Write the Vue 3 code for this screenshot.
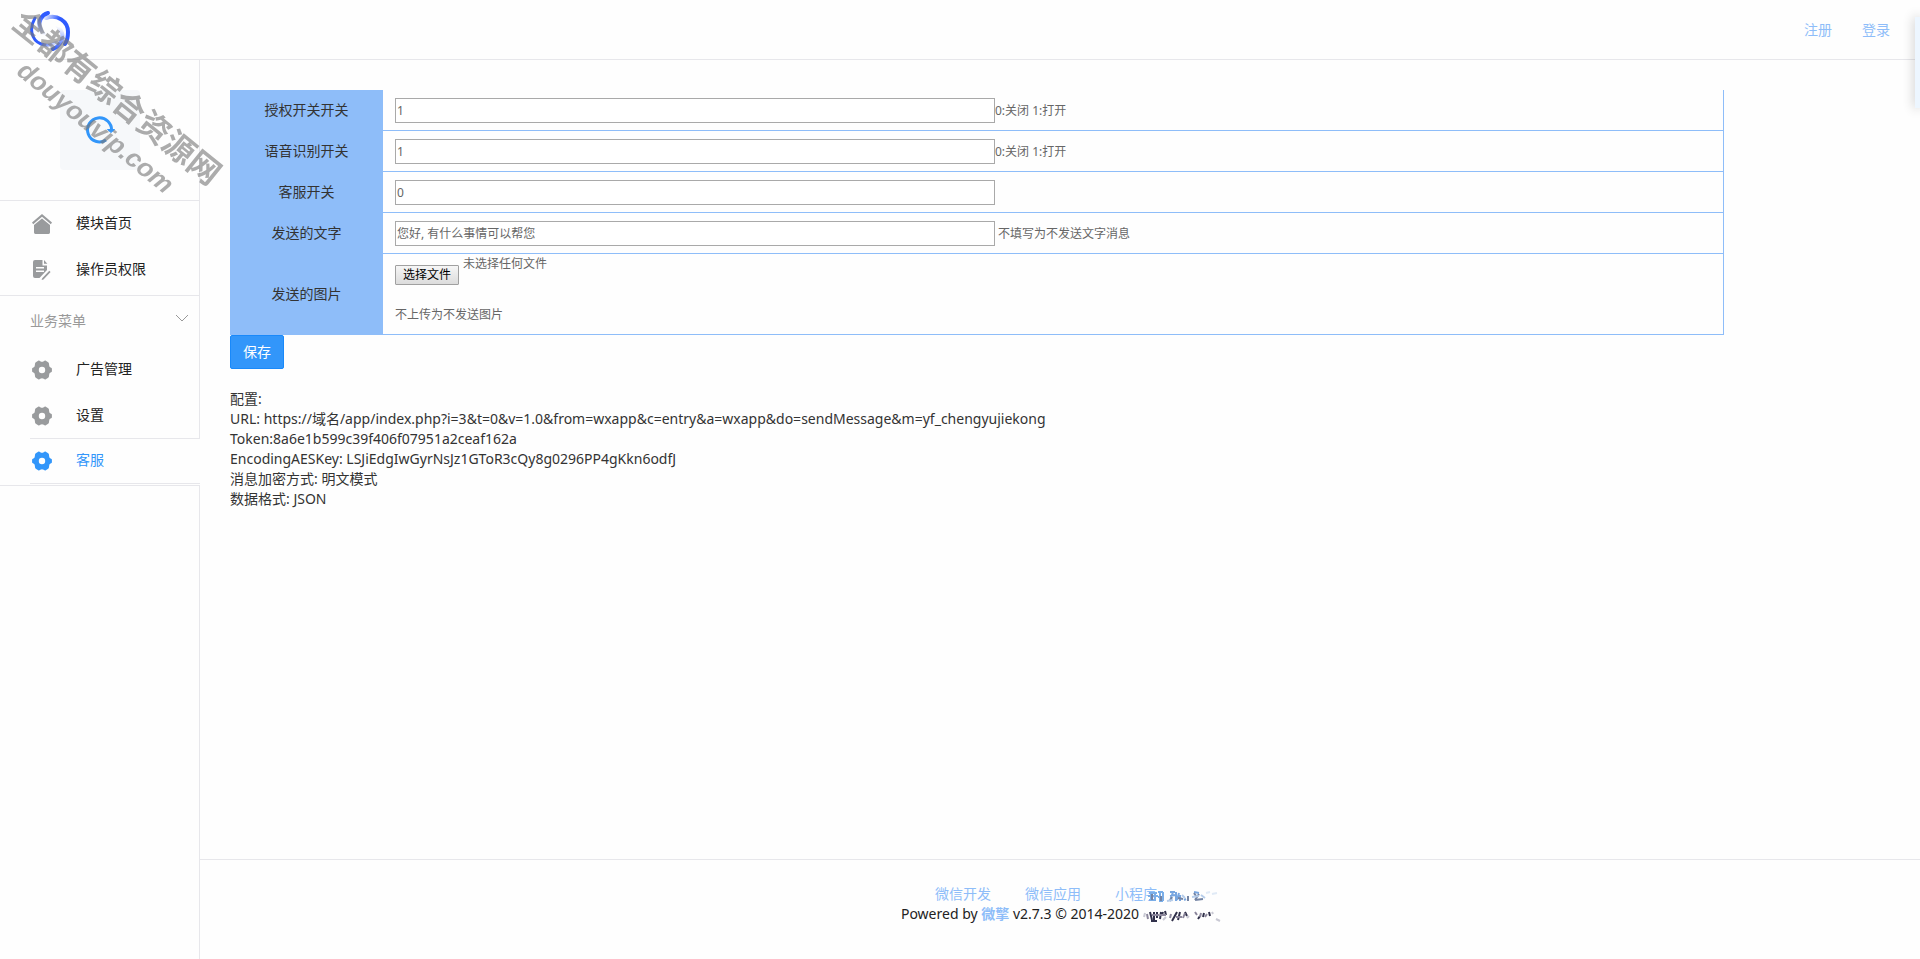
<script setup>
import { ref } from 'vue'

const gear =
  'M19.9 8.4V11.6Q19.8 12.2 18.6 12.6Q17.2 13.2 17.2 14.6L16.9 16.8Q16.8 17.5 15.4 18.3L13.4 19.4Q12.8 19.7 11.7 18.8Q10 17.6 8.3 18.8Q7.2 19.7 6.6 19.4L4.6 18.3Q3.2 17.5 3.1 16.8L2.8 14.6Q2.8 13.2 1.4 12.6Q0.2 12.2 0.1 11.6V8.4Q0.2 7.8 1.4 7.4Q2.8 6.8 2.8 5.4L3.1 3.2Q3.2 2.5 4.6 1.7L6.6 0.6Q7.2 0.3 8.3 1.2Q10 2.4 11.7 1.2Q12.8 0.3 13.4 0.6L15.4 1.7Q16.8 2.5 16.9 3.2L17.2 5.4Q17.2 6.8 18.6 7.4Q19.8 7.8 19.9 8.4ZM10 6.8A3.2 3.2 0 1 0 10 13.2 3.2 3.2 0 1 0 10 6.8Z'
const house = 'M10 4.4 18 11V18.6Q18 20 16.6 20H3.4Q2 20 2 18.6V11ZM10 0 20 8.6 18.8 10.2 10 2.8 1.2 10.2 0 8.6Z'
const doc =
  'M3 0H10.5V5.4H15V10L7.5 18H3Q1 18 1 16V2Q1 0 3 0ZM4 7V8.4H12V7ZM4 10.6V12H12V10.6ZM12 0 15.4 3.8H12ZM17.3 10.8 18.6 12 11.5 19.4 9.6 20 10.2 18.2Z'

const topMenu = [
  { label: '模块首页', icon: house },
  { label: '操作员权限', icon: doc }
]
const bizMenu = [
  { label: '广告管理', icon: gear },
  { label: '设置', icon: gear },
  { label: '客服', icon: gear, active: true }
]
const rows = ref([
  { id: 'auth', label: '授权开关开关', value: '1', note: '0:关闭 1:打开' },
  { id: 'voice', label: '语音识别开关', value: '1', note: '0:关闭 1:打开' },
  { id: 'service', label: '客服开关', value: '0', note: '' },
  { id: 'text', label: '发送的文字', value: '您好, 有什么事情可以帮您', note: '不填写为不发送文字消息', spaced: true }
])
const config = [
  '配置:',
  'URL: https://域名/app/index.php?i=3&t=0&v=1.0&from=wxapp&c=entry&a=wxapp&do=sendMessage&m=yf_chengyujiekong',
  'Token:8a6e1b599c39f406f07951a2ceaf162a',
  'EncodingAESKey: LSJiEdgIwGyrNsJz1GToR3cQy8g0296PP4gKkn6odfJ',
  '消息加密方式: 明文模式',
  '数据格式: JSON'
]
</script>

<template>
  <div class="page">
    <header class="topbar">
      <a class="logo" href="#" aria-label="首页">
        <svg width="42" height="42" viewBox="0 0 42 42" fill="none" stroke-linecap="round">
          <defs>
            <linearGradient id="arcLeft" gradientUnits="userSpaceOnUse" x1="8" y1="20" x2="28" y2="34">
              <stop offset="0.4" stop-color="#2f5bff" />
              <stop offset="1" stop-color="#2f5bff" stop-opacity="0.1" />
            </linearGradient>
            <linearGradient id="arcRight" gradientUnits="userSpaceOnUse" x1="14" y1="8" x2="30" y2="16">
              <stop offset="0" stop-color="#2f5bff" stop-opacity="0.1" />
              <stop offset="0.8" stop-color="#2f5bff" />
            </linearGradient>
            <linearGradient id="arcTop" gradientUnits="userSpaceOnUse" x1="16" y1="4" x2="12" y2="26">
              <stop offset="0.2" stop-color="#2f5bff" />
              <stop offset="1" stop-color="#2f5bff" stop-opacity="0" />
            </linearGradient>
            <linearGradient id="arcBottom" gradientUnits="userSpaceOnUse" x1="24" y1="40" x2="30" y2="18">
              <stop offset="0" stop-color="#2f5bff" />
              <stop offset="1" stop-color="#2f5bff" stop-opacity="0" />
            </linearGradient>
          </defs>
          <path d="M5 9C-1 19 1 31 11 35C17 37 23 36 27 33" stroke="url(#arcLeft)" stroke-width="3" />
          <path d="M16 9C27 5 38 12 38 23C38 28 37 32 35 35" stroke="url(#arcRight)" stroke-width="4" />
          <path d="M18 4C11 6 8 13 10 19C11 22 12 24 14 26" stroke="url(#arcTop)" stroke-width="4" />
          <path d="M23 40C30 37 34 30 32 24C31 20 29 18 27 16" stroke="url(#arcBottom)" stroke-width="4" />
        </svg>
      </a>
      <nav class="account">
        <a href="#">注册</a>
        <a href="#">登录</a>
      </nav>
    </header>

    <div class="body">
      <aside class="sidebar">
        <div class="module">
          <div class="thumb">
            <svg width="30" height="30" viewBox="0 0 30 30" fill="none" stroke="#3296fa" stroke-width="3">
              <path d="M26.5 16A12 12 0 1 0 21 25" />
              <path d="M22.5 14.5H29.5L26 17.5Z" fill="#3296fa" stroke-width="1" />
            </svg>
          </div>
        </div>
        <ul class="menu">
          <li v-for="m in topMenu" :key="m.label">
            <a href="#">
              <svg width="20" height="20" viewBox="0 0 20 20"><path :d="m.icon" fill="currentColor" fill-rule="evenodd" /></svg>
              <span>{{ m.label }}</span>
            </a>
          </li>
        </ul>
        <button class="group" type="button">
          业务菜单
          <svg width="14" height="14" viewBox="0 0 14 14" fill="none" stroke="#999"><path d="M1 1 7 7 13 1" /></svg>
        </button>
        <ul class="menu biz">
          <li v-for="m in bizMenu" :key="m.label" :class="{ active: m.active }">
            <a href="#">
              <svg width="20" height="20" viewBox="0 0 20 20"><path :d="m.icon" fill="currentColor" fill-rule="evenodd" /></svg>
              <span>{{ m.label }}</span>
            </a>
          </li>
        </ul>
        <div class="rest"></div>
      </aside>

      <div class="content">
        <main>
          <form @submit.prevent>
            <table>
              <tbody>
                <tr v-for="r in rows" :key="r.id">
                  <th scope="row"><label :for="r.id">{{ r.label }}</label></th>
                  <td>
                    <div class="field">
                      <input :id="r.id" v-model="r.value" type="text" />
                      <span :class="{ spaced: r.spaced }">{{ r.note }}</span>
                    </div>
                  </td>
                </tr>
                <tr class="upload">
                  <th scope="row"><span id="picture">发送的图片</span></th>
                  <td>
                    <div class="file">
                      <button type="button" aria-describedby="picture">选择文件</button>
                      <span>未选择任何文件</span>
                    </div>
                    <p>不上传为不发送图片</p>
                  </td>
                </tr>
              </tbody>
            </table>
            <button class="save" type="submit">保存</button>
          </form>
          <div class="config">
            <div v-for="line in config" :key="line">{{ line }}</div>
          </div>
        </main>
        <footer>
          <nav>
            <a href="#">微信开发</a>
            <a href="#">微信应用</a>
            <a href="#">小程序</a>
          </nav>
          <div class="powered">
            Powered by <a href="#"><b>微擎</b></a> v2.7.3 © 2014-2020
            <svg class="smudge" width="84" height="44" viewBox="0 0 84 44" aria-hidden="true">
              <g fill="none" stroke-width="2">
                <path stroke="#7aaee8" d="M10 9H18M9 12H19M10 16H17M12 8V17M16 8V17M19 8H24M19 13H24M20 17H24M21 9V17M24 8V17" />
                <path stroke="#78a6e0" d="M31 8 36 8M31 12 36 11M34 8 31 17M37 8V17M40 9 38 16M41 11V17M45 16 47 15M55 8 60 9" />
                <path stroke="#7484a4" d="M13 10V16M22 12V17M33 13 31 17M39 14 44 15M49 12V17M55 9 57 12M60 10 56 16M56 16 64 15" />
                <path stroke="#b6cdea" d="M28 17 34 16M43 11 46 14M53 13 60 12M62 11 66 14" />
                <path stroke="#e0eaf6" d="M67 9 71 8M73 10 78 9" />
                <path stroke="#30304a" d="M11 28 13 36M15 28V37M12 37H18M18 28V34M22 28 21 35M24 28 23 31M26 27 27 31M38 28 33 37M41 28 39 36M46 28 48 32M61 32 59 35M65 29 64 33M70 28 71 32" />
                <path stroke="#8c879c" d="M8 30 9 35M13 31H20M21 31H27M32 30 31 34M37 33H43M44 34 46 29M56 28 58 31M62 29 61 33M66 33 68 30" />
                <path stroke="#c9c9d4" d="M6 29 5 33M27 33 24 36M50 32 48 34M73 28 74 30M77 35 81 37" />
              </g>
            </svg>
          </div>
        </footer>
      </div>
    </div>

    <div class="watermark" aria-hidden="true">
      <div class="cn">全都有综合资源网</div>
      <div class="en">douyouvip.com</div>
    </div>
    <div class="drawer"></div>
  </div>
</template>

<style>
body {
  background: #fefefe;
}
</style>

<style scoped>
* {
  box-sizing: border-box;
}
.page {
  position: relative;
  display: flex;
  flex-direction: column;
  min-height: 100vh;
  overflow: hidden;
  background: #fefefe;
  color: #333;
  font: 14px/20px "Noto Sans", "Noto Sans CJK SC", sans-serif;
}
a {
  color: #8ebdf9;
  text-decoration: none;
}
.topbar {
  display: flex;
  align-items: center;
  justify-content: space-between;
  height: 60px;
  padding: 0 30px;
  border-bottom: 1px solid #e7e7eb;
}
.logo {
  height: 42px;
}
.account {
  display: flex;
  gap: 30px;
}
.body {
  display: flex;
  flex: 1;
}
.sidebar {
  display: flex;
  flex-direction: column;
  width: 200px;
}
.module {
  padding: 30px 0 30px 60px;
  border: solid #e7e7eb;
  border-width: 0 1px 1px 0;
}
.thumb {
  display: flex;
  align-items: center;
  justify-content: center;
  width: 80px;
  height: 80px;
  border-radius: 4px;
  background: #f6f8fa;
}
.menu {
  margin: 0;
  padding: 0 0 2px;
  list-style: none;
  border: solid #e7e7eb;
  border-width: 0 1px 1px 0;
}
.menu a {
  display: flex;
  align-items: center;
  gap: 24px;
  height: 46px;
  padding-left: 32px;
  color: #222;
}
.menu span {
  padding-bottom: 2px;
}
.menu svg {
  color: #999b9d;
}
.group {
  display: flex;
  align-items: center;
  justify-content: space-between;
  height: 50px;
  padding: 0 10px 0 30px;
  border: 0;
  border-right: 1px solid #e7e7eb;
  background: none;
  color: #999;
  font: inherit;
}
.biz {
  padding-bottom: 1px;
  border-right: 0;
}
.biz li {
  border-right: 1px solid #e7e7eb;
}
.biz a {
  padding-top: 2px;
}
.biz .active {
  margin-left: 30px;
  border: solid #e7e7eb;
  border-width: 1px 0;
}
.biz .active a {
  height: 44px;
  padding: 0 0 0 2px;
  color: #3296fa;
}
.biz .active svg {
  color: #3296fa;
}
.rest {
  flex: 1;
  border-right: 1px solid #e7e7eb;
}
.content {
  display: flex;
  flex: 1;
  flex-direction: column;
}
main {
  flex: 1;
  padding: 30px;
}
table {
  width: 90%;
  border-collapse: separate;
  border-spacing: 0;
  border-right: 1px solid #8ebdf9;
}
th {
  width: 153px;
  padding: 0 0 2px;
  background: #8ebdf9;
  font-weight: 400;
}
td {
  height: 41px;
  padding: 0 12px;
  border-bottom: 1px solid #8ebdf9;
  color: #666;
  font-size: 12px;
}
.field {
  display: flex;
  align-items: center;
}
.field input {
  width: 600px;
  height: 25px;
  padding: 1px;
  border: 1px solid #a9a9a9;
  background: #fff;
  color: #666;
  font: inherit;
}
.field span {
  padding-top: 2px;
}
.field .spaced {
  padding-left: 3px;
}
.upload td {
  height: 81px;
  vertical-align: top;
}
.file {
  display: flex;
  gap: 4px;
}
.file button {
  height: 20px;
  margin-top: 11px;
  padding: 0 7px;
  border: 1px solid #a0a0a0;
  border-radius: 1px;
  background: linear-gradient(#f6f6f6, #dcdcdc);
  color: #000;
  font: inherit;
  line-height: 18px;
}
p {
  margin: 20px 0 0;
}
.save {
  display: block;
  width: 54px;
  height: 34px;
  padding: 0;
  border: 1px solid #1989fa;
  border-radius: 2px;
  background: #3296fa;
  color: #fff;
  font: inherit;
}
.config {
  margin-top: 20px;
}
footer {
  display: flex;
  flex-direction: column;
  align-items: center;
  height: 100px;
  padding-top: 24px;
  border-top: 1px solid #e7e7eb;
  color: #222;
}
footer nav {
  display: flex;
  gap: 34px;
  padding-right: 28px;
}
.powered {
  position: relative;
  padding-right: 80px;
}
.smudge {
  position: absolute;
  right: -4px;
  bottom: -4px;
  filter: blur(0.6px);
}
.watermark {
  position: absolute;
  top: 4px;
  left: 28px;
  color: #777;
  font-family: "Liberation Sans", "Noto Sans CJK SC", sans-serif;
  font-weight: 700;
  white-space: nowrap;
  opacity: 0.6;
  transform: rotate(39deg);
  transform-origin: 0 0;
}
.cn {
  font-size: 32px;
  line-height: 34px;
}
.en {
  padding-left: 34px;
  font-size: 26px;
  font-style: italic;
  line-height: 38px;
}
.drawer {
  position: absolute;
  top: 17px;
  right: 0;
  width: 5px;
  height: 91px;
  background: #edf6ff;
  box-shadow: 0 0 12px rgba(0, 0, 0, 0.3);
}
</style>
